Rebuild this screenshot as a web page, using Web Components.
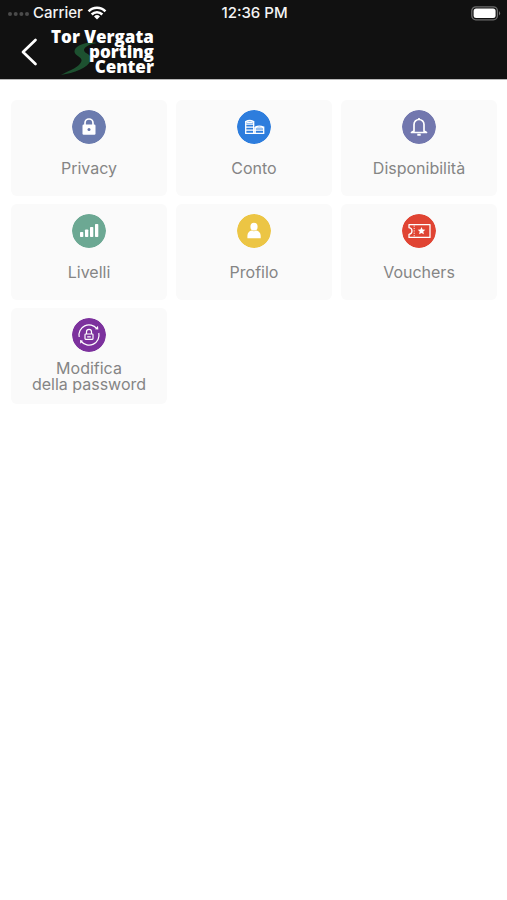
<!DOCTYPE html>
<html lang="it">
<head>
<meta charset="utf-8">
<meta name="viewport" content="width=device-width, initial-scale=1">
<title>Tor Vergata Sporting Center</title>
<style>
body { margin: 0; background: #fff; font-family: Inter, "Liberation Sans", sans-serif; }
</style>
</head>
<body>
<app-screen></app-screen>
<script>
const define = (name, html) => customElements.define(name, class extends HTMLElement {
  constructor() {
    super();
    this.attachShadow({ mode: 'open' }).innerHTML = html;
  }
});

define('status-bar', `
<style>
:host { display: grid; grid-template-columns: 1fr auto 1fr; align-items: center; height: 26px; padding: 0 6px 0 8px; color: #f4f4f4; font-size: 15px; font-weight: 500; line-height: 18px; }
.left { display: flex; align-items: center; gap: 4px; }
.battery { justify-self: end; }
svg { display: block; }
</style>
<div class="left">
  <svg width="21" height="6" viewBox="0 0 21 6" fill="#4b4b4b" aria-hidden="true"><circle cx="2" cy="4" r="2"/><circle cx="7.7" cy="4" r="2"/><circle cx="13.4" cy="4" r="2"/><circle cx="19" cy="4" r="2"/></svg>
  <span>Carrier</span>
  <svg width="20" height="14" viewBox="0 0 20 14" fill="none" stroke="#fff" stroke-width="2.6" aria-hidden="true"><path d="M1.6 5.3a11.8 11.8 0 0 1 16.8 0M4.7 8.5a7.5 7.5 0 0 1 10.6 0"/><path d="M7 10.4a4.3 4.3 0 0 1 6 0l-3 3.2z" fill="#fff" stroke="none"/></svg>
</div>
<time>12:36 PM</time>
<svg class="battery" width="30" height="15" viewBox="0 0 30 15" role="img" aria-label="Batteria carica"><rect x=".8" y=".8" width="25.6" height="13" rx="4" fill="none" stroke="#6c6c6c" stroke-width="1.3"/><rect x="2.6" y="2.6" width="22" height="9.4" rx="2.5" fill="#fff"/><path d="M28 5q2.2 2.3 0 4.6z" fill="#777"/></svg>
`);

define('club-logo', `
<style>
:host { display: block; position: relative; font: 800 17px/15px "Open Sans", Lato, sans-serif; color: #fff; text-align: right; }
span { display: block; position: relative; white-space: nowrap; }
svg { position: absolute; left: 10px; top: 12px; }
</style>
<svg width="36" height="34" viewBox="0 0 36 34" aria-hidden="true"><path d="M36 2C25 0 13 5 13.500 11c.5 4 8 5 7 9C19 26 9 29 0 34c13-2 27-7 30-15 1.500-6-7-6-7-10 0-3 6-6 13-7z" fill="#1d5130"/></svg>
<span>Tor Vergata</span><span>porting</span><span>Center</span>
`);

define('nav-bar', `
<style>
:host { display: flex; align-items: flex-start; height: 53px; padding-left: 16px; }
button { width: 26px; height: 52px; margin: 0 9px 0 0; padding: 0; border: 0; background: none; color: #fff; cursor: pointer; }
svg { display: block; margin: auto; }
club-logo { margin-top: 3px; }
</style>
<button type="button" aria-label="Indietro"><svg width="18" height="28" viewBox="0 0 18 28" fill="none" stroke="currentColor" stroke-width="2.7" stroke-linecap="round" stroke-linejoin="round"><path d="M15.5 2 3 14l12.500 12"/></svg></button>
<club-logo></club-logo>
`);

const icons = {
  lock: '<path d="M13 15v-2a4 4 0 0 1 8 0v2" fill="none" stroke="#fff" stroke-width="1.7"/><rect x="10.5" y="14.5" width="13" height="10.3" rx="1.2" fill="#fff"/><circle cx="17" cy="19.5" r="1.5" fill="#6574a8"/>',
  coins: '<g fill="none" stroke="#fff" stroke-width="1.3"><path d="M8.7 11v12.3h18V17q-4.5-1.8-8.5 0M8.7 11.5q4-2 8 0v11.8M8.7 14.2h8M8.7 17.2h8M8.7 20.2h18M18.2 17v6.3M18.2 17.8h8"/><path d="M8.7 11.6q4 1.6 8 0"/></g>',
  bell: '<g fill="none" stroke="#fff" stroke-width="1.7" stroke-linejoin="round"><path d="M12 21v-6.5a5 5 0 0 1 10 0V21l2.5 1.5h-15zM17 8v1.5"/><path d="M15.3 24.8h3.4" stroke-width="2"/></g>',
  levels: '<g fill="#fff"><rect x="8" y="18" width="3.3" height="5" rx=".8"/><rect x="13" y="15.5" width="3.3" height="7.5" rx=".8"/><rect x="18" y="13" width="3.3" height="10" rx=".8"/><rect x="23" y="10" width="3.3" height="13" rx=".8"/></g>',
  person: '<g fill="#fff"><ellipse cx="17" cy="12.7" rx="3.6" ry="3.9"/><path d="M10.4 24.2v-2.4c0-3 2-4.8 4.2-5.2q2.4 1.4 4.8 0c2.2.4 4.3 2.2 4.3 5.2v2.4z"/></g>',
  ticket: '<path d="M7 10.6h21v12.8H7v-3.1q3-.4 3-3.3t-3-3.3z" fill="none" stroke="#fff" stroke-width="1.3" stroke-linejoin="round"/><path d="M12.2 11.5v11" stroke="#fff" stroke-width=".9" stroke-dasharray="1.2 1.2"/><path d="m19.5 13 1.1 2.5 2.7.3-2 1.8.6 2.7-2.4-1.4-2.4 1.4.6-2.7-2-1.8 2.7-.3z" fill="#fff"/>',
  password: '<g fill="none" stroke="#fff" stroke-width="1.2"><path d="M7.2 19A10 10 0 0 1 24.8 10.7M26.8 15A10 10 0 0 1 9.3 23.5"/><rect x="13" y="16" width="8" height="5.3" rx=".7"/><path d="M14.5 16v-2.2a2.5 2.5 0 0 1 5 0V16M15.2 18.8h3.6"/></g><path d="m23 11.3 3.3.2-.3-3.8zM11 22.8l-3-.8.3 3.8z" fill="#fff"/>'
};

customElements.define('menu-tile', class extends HTMLElement {
  constructor() {
    super();
    this.attachShadow({ mode: 'open' }).innerHTML = `
<style>
:host { display: block; min-width: 0; }
button { display: flex; flex-direction: column; align-items: center; box-sizing: border-box; width: 100%; height: 96px; margin: 0; padding: 10px 4px 8px; border: 0; border-radius: 6px; background: #fafafa; color: #858585; font: inherit; font-size: 16px; line-height: 16px; cursor: pointer; }
svg { display: block; flex: none; border-radius: 50%; }
span { display: grid; flex: 1; place-content: center; padding-top: 4px; }
</style>
<button type="button"><svg width="34" height="34" viewBox="0 0 34 34" aria-hidden="true"><circle cx="17" cy="17" r="17" fill="${this.getAttribute('tint')}"/>${icons[this.getAttribute('icon')]}</svg><span><slot></slot></span></button>`;
  }
});

define('app-screen', `
<style>
:host { display: block; min-height: 100vh; background: #fff; }
header { background: #111; border-bottom: 1px solid #b8b8b8; box-sizing: border-box; }
main { display: grid; grid-template-columns: repeat(3, minmax(0, 1fr)); gap: 8px 9px; padding: 20px 10px 20px 11px; }
</style>
<header><status-bar></status-bar><nav-bar></nav-bar></header>
<main>
<menu-tile icon="lock" tint="#6b7bae">Privacy</menu-tile>
<menu-tile icon="coins" tint="#2d7ddd">Conto</menu-tile>
<menu-tile icon="bell" tint="#7277ae">Disponibilità</menu-tile>
<menu-tile icon="levels" tint="#6ca893">Livelli</menu-tile>
<menu-tile icon="person" tint="#ecc544">Profilo</menu-tile>
<menu-tile icon="ticket" tint="#e04433">Vouchers</menu-tile>
<menu-tile icon="password" tint="#7c319d">Modifica<br>della password</menu-tile>
</main>
`);
</script>
</body>
</html>
